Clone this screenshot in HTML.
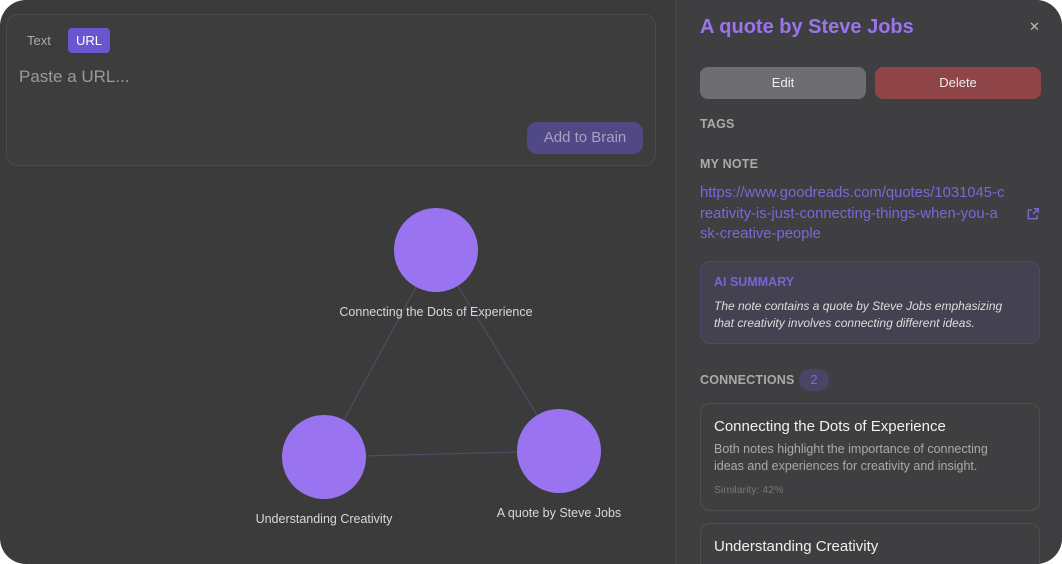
<!DOCTYPE html>
<html><head><style>
*{box-sizing:border-box;margin:0;padding:0}
html,body{width:1062px;height:564px;background:#fff;overflow:hidden;font-family:"Liberation Sans",sans-serif}
.app{position:absolute;left:0;top:0;width:1062px;height:564px;background:#3b3b3b;border-radius:26px;overflow:hidden}
.card{position:absolute;left:6px;top:14px;width:650px;height:152px;border:1px solid #4a4a4a;border-radius:12px;background:#3d3d3d}
.tab{position:absolute;top:13px;height:25px;font-size:13px;line-height:25px;border-radius:4px;padding:0 8px}
.ph{position:absolute;left:12px;top:52px;font-size:17px;color:#9a9a9a}
.add{position:absolute;left:520px;top:107px;width:116px;height:32px;background:#514886;border-radius:10px;color:#a6a0c4;font-size:15px;text-align:center;line-height:32px}
.right{position:absolute;left:675px;top:0;width:387px;height:564px;background:#3f3f41;border-left:1px solid #474747;overflow:hidden}
.title{position:absolute;left:24px;top:16px;font-size:20px;font-weight:bold;color:#9a74ee}
.x{position:absolute;left:353px;top:19px;color:#bbb;font-size:13px}
.btn{position:absolute;top:67px;height:32px;border-radius:8px;color:#eee;font-size:13px;text-align:center;line-height:32px}
.lbl{position:absolute;left:24px;font-size:12.5px;font-weight:bold;color:#aaa;letter-spacing:.2px}
.link{position:absolute;left:24px;top:183px;font-size:14.8px;line-height:20.5px;color:#7d66d8;white-space:nowrap}
.ai{position:absolute;left:24px;top:261px;width:340px;height:83px;border:1px solid #4c4870;background:#444250;border-radius:10px}
.conn{position:absolute;left:24px;width:340px;border:1px solid #505050;border-radius:10px;background:#3f3f41}
</style></head><body>
<div class="app">
<div class="card">
<div class="tab" style="left:12px;color:#aaa">Text</div>
<div class="tab" style="left:61px;background:#6c56cf;color:#fff">URL</div>
<div class="ph">Paste a URL...</div>
<div class="add">Add to Brain</div>
</div>
<svg style="position:absolute;left:0;top:0" width="675" height="564">
<g stroke="#4e4c66" stroke-width="1.2">
<line x1="436" y1="250" x2="324" y2="457"/><line x1="436" y1="250" x2="559" y2="451"/><line x1="324" y1="457" x2="559" y2="451"/>
</g>
<g fill="#9a74f0"><circle cx="436" cy="250" r="42"/><circle cx="324" cy="457" r="42"/><circle cx="559" cy="451" r="42"/></g>
<g fill="#d8d8d8" font-size="12.5" font-family="Liberation Sans" text-anchor="middle">
<text x="436" y="316">Connecting the Dots of Experience</text>
<text x="324" y="523">Understanding Creativity</text>
<text x="559" y="517">A quote by Steve Jobs</text>
</g></svg>
<div class="right">
<div class="title">A quote by Steve Jobs</div>
<div class="x">✕</div>
<div class="btn" style="left:24px;width:166px;background:#6e6e72">Edit</div>
<div class="btn" style="left:199px;width:166px;background:#8f4448">Delete</div>
<div class="lbl" style="top:117px">TAGS</div>
<div class="lbl" style="top:157px">MY NOTE</div>
<div class="link">https://www.goodreads.com/quotes/1031045-c<br>reativity-is-just-connecting-things-when-you-a<br>sk-creative-people</div>
<svg style="position:absolute;left:350px;top:207px" width="14" height="14" viewBox="0 0 24 24" fill="none" stroke="#7d66d8" stroke-width="2.4"><path d="M14 3h7v7M21 3l-9 9M19 14v6H4V5h6"/></svg>
<div class="ai">
<div style="position:absolute;left:13px;top:13px;font-size:12.5px;font-weight:bold;color:#7a62d8">AI SUMMARY</div>
<div style="position:absolute;left:13px;top:36px;width:300px;font-size:12px;line-height:16.5px;font-style:italic;color:#ddd">The note contains a quote by Steve Jobs emphasizing that creativity involves connecting different ideas.</div>
</div>
<div class="lbl" style="top:373px">CONNECTIONS</div>
<div style="position:absolute;left:123px;top:369px;width:30px;height:22px;border-radius:11px;background:#4a4567;color:#7d66d8;font-size:13px;text-align:center;line-height:22px">2</div>
<div class="conn" style="top:403px;height:108px">
<div style="position:absolute;left:13px;top:14px;font-size:15px;color:#f0f0f0">Connecting the Dots of Experience</div>
<div style="position:absolute;left:13px;top:37px;width:295px;font-size:12.5px;line-height:16.5px;color:#aaa">Both notes highlight the importance of connecting ideas and experiences for creativity and insight.</div>
<div style="position:absolute;left:13px;top:80px;font-size:10.5px;color:#777">Similarity: 42%</div>
</div>
<div class="conn" style="top:523px;height:60px">
<div style="position:absolute;left:13px;top:14px;font-size:15px;color:#f0f0f0">Understanding Creativity</div>
</div>
</div>
</div>
</body></html>
